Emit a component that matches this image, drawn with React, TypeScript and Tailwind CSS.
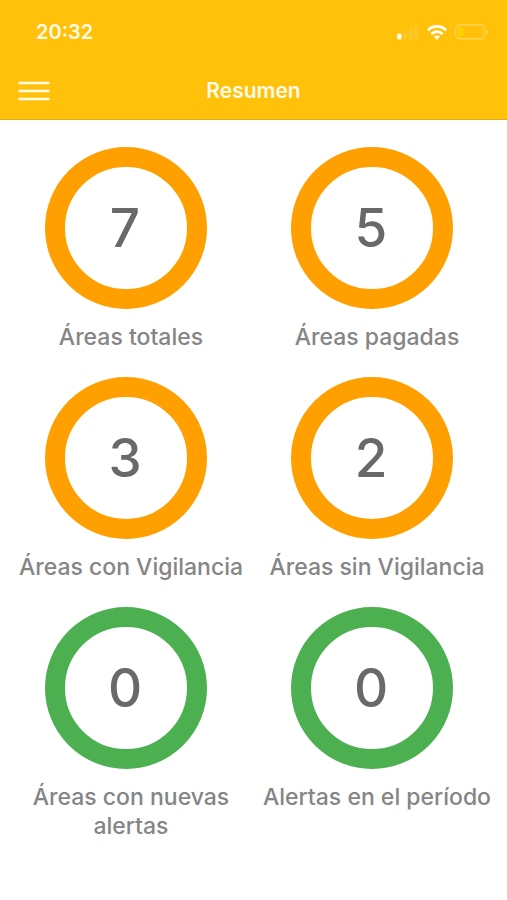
import React from 'react';

interface Stat {
  value: number;
  label: string;
  color: 'orange' | 'green';
}

const stats: Stat[] = [
  { value: 7, label: 'Áreas totales', color: 'orange' },
  { value: 5, label: 'Áreas pagadas', color: 'orange' },
  { value: 3, label: 'Áreas con Vigilancia', color: 'orange' },
  { value: 2, label: 'Áreas sin Vigilancia', color: 'orange' },
  { value: 0, label: 'Áreas con nuevas alertas', color: 'green' },
  { value: 0, label: 'Alertas en el período', color: 'green' },
];

const SignalIcon = () => (
  <svg width="24" height="16" viewBox="0 0 24 16" fill="#fff" aria-hidden="true">
    <rect x="2" y="9.5" width="4.6" height="6" rx="1.6" fillOpacity="0.95" />
    <rect x="8.5" y="7" width="3.6" height="8.5" rx="1" fillOpacity="0.14" />
    <rect x="14" y="4.5" width="3.6" height="11" rx="1" fillOpacity="0.14" />
    <rect x="19.5" y="1.5" width="3.6" height="14" rx="1" fillOpacity="0.14" />
  </svg>
);

const WifiIcon = () => (
  <svg width="20" height="15" viewBox="0 0 20 15" fill="none" stroke="#fff" strokeWidth="2.8" aria-hidden="true">
    <path d="M1 5.2C6 0.2 14 0.2 19 5.2" />
    <path d="M4.4 8.9C7.6 5.8 12.4 5.8 15.6 8.9" />
    <path d="M10 14.8L6.9 11.6C8.7 10 11.3 10 13.1 11.6Z" fill="#fff" stroke="none" />
  </svg>
);

const BatteryIcon = () => (
  <svg width="34" height="16" viewBox="0 0 34 16" aria-hidden="true">
    <rect x="0.75" y="0.75" width="28.5" height="14" rx="3.5" fill="none" stroke="#fff" strokeOpacity="0.3" strokeWidth="1.3" />
    <rect x="3" y="3" width="5" height="9.5" rx="1.5" fill="#ffd000" />
    <path d="M31 5C33.4 6 33.4 9.6 31 10.6Z" fill="#fff" fillOpacity="0.35" />
  </svg>
);

const MenuIcon = () => (
  <svg width="32" height="20" viewBox="0 0 32 20" fill="none" stroke="currentColor" strokeWidth="2.5" strokeLinecap="round" aria-hidden="true">
    <path d="M1.5 2H30.5M1.5 10H30.5M1.5 18H30.5" />
  </svg>
);

const StatCircle: React.FC<{ stat: Stat }> = ({ stat }) => (
  <li className="flex flex-col items-center">
    <div className="pr-2.5">
      <div
        className={`flex size-[162px] items-center justify-center rounded-full border-20 pr-0.5 ${
          stat.color === 'orange' ? 'border-[#ffa000]' : 'border-[#4caf50]'
        }`}
      >
        <span className="text-[53px] leading-none font-medium text-[#696969]">{stat.value}</span>
      </div>
    </div>
    <p className="mt-3.5 text-center text-[23px] leading-[29px] font-medium text-[#858585]">{stat.label}</p>
  </li>
);

export default function App() {
  return (
    <div className="min-h-screen bg-white font-['Inter',sans-serif]">
      <header className="border-b border-[#e0b020] bg-[#ffc10a] text-[#fffbe8]">
        <div className="flex h-16 items-center justify-between pr-[18px] pl-9">
          <span className="text-xl font-semibold">20:32</span>
          <div className="flex items-center gap-2">
            <SignalIcon />
            <WifiIcon />
            <BatteryIcon />
          </div>
        </div>
        <div className="grid h-[55px] grid-cols-[1fr_auto_1fr] items-center px-[18px] pb-0.5">
          <button type="button" aria-label="Menú" className="w-8">
            <MenuIcon />
          </button>
          <h1 className="text-[21px] font-semibold">Resumen</h1>
        </div>
      </header>

      <main className="pt-[27px] pr-[7px] pb-6 pl-2">
        <ul className="grid grid-cols-2 gap-y-[25px]">
          {stats.map((stat) => (
            <StatCircle key={stat.label} stat={stat} />
          ))}
        </ul>
      </main>
    </div>
  );
}
